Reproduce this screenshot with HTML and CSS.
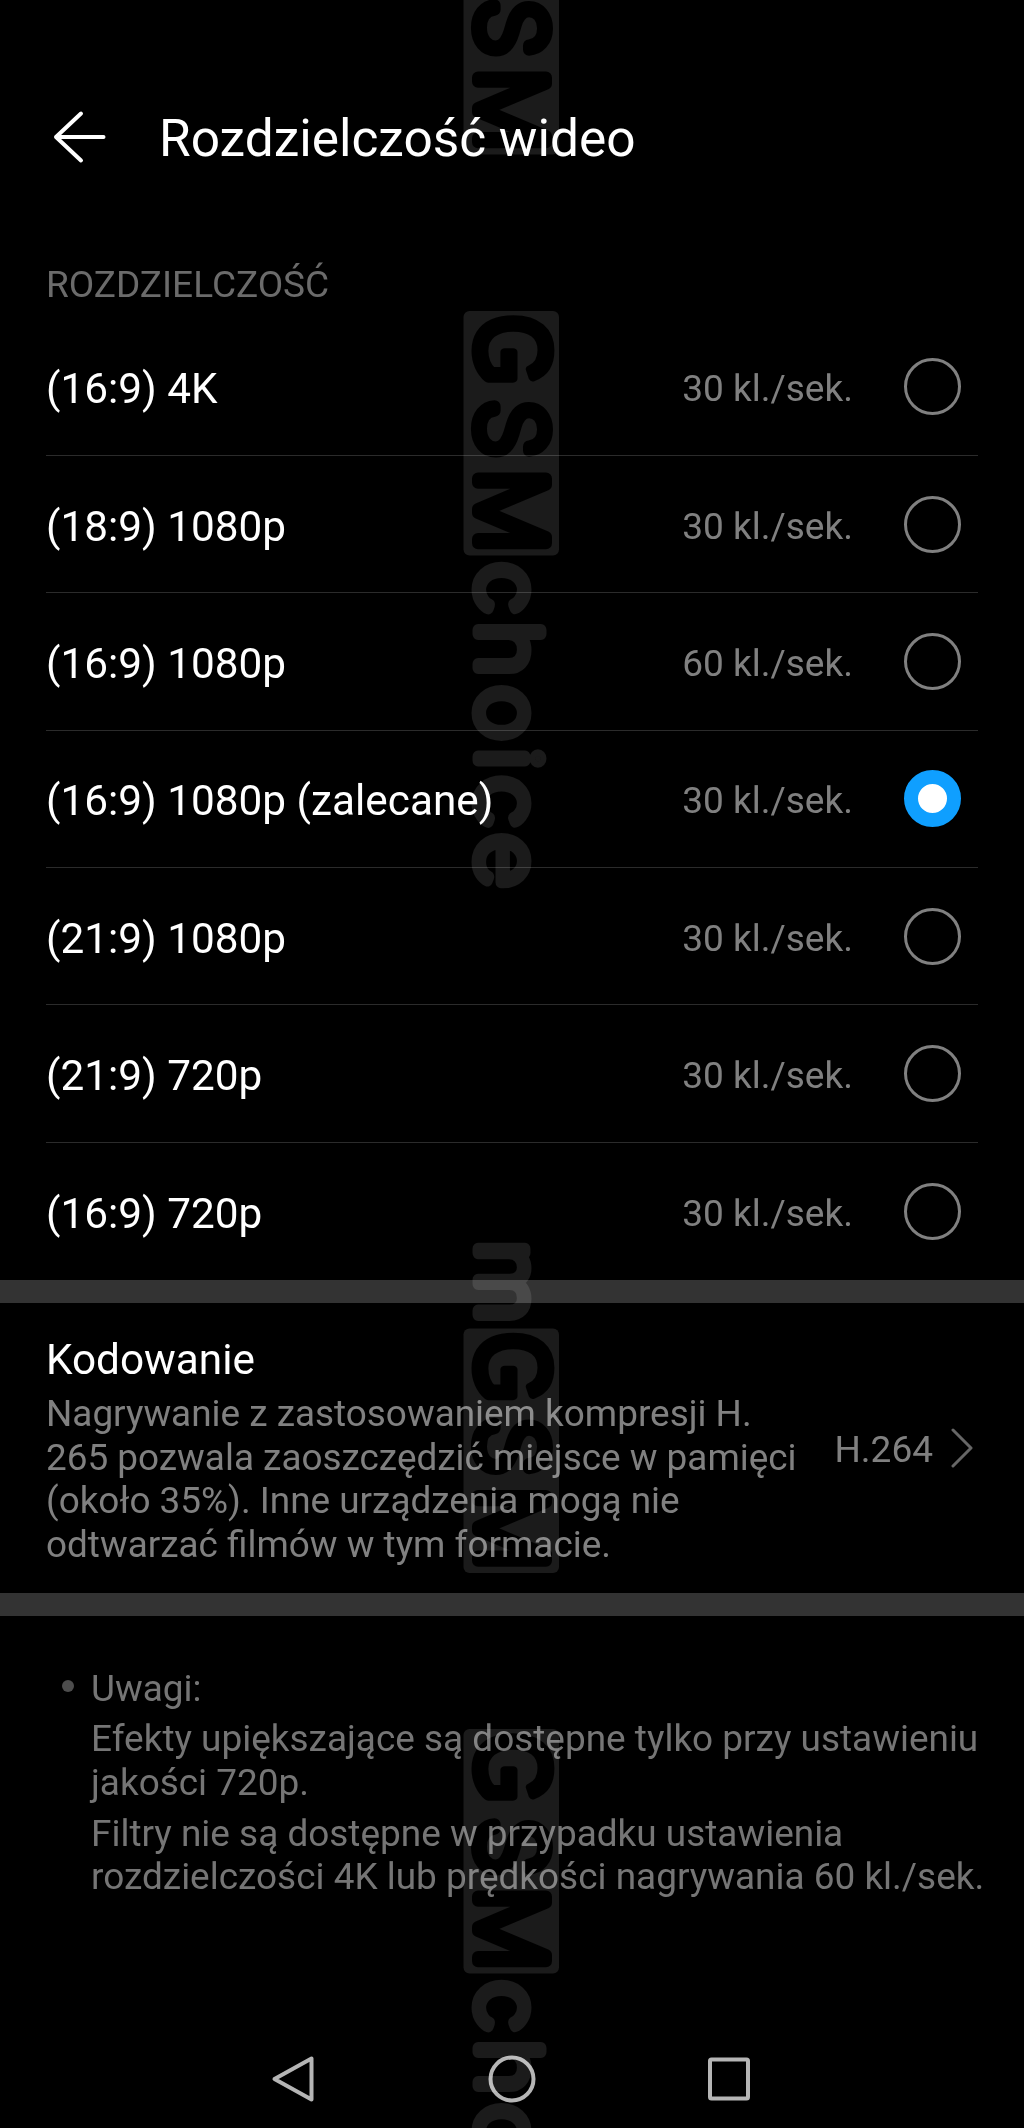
FILE: index.html
```html
<!DOCTYPE html>
<html lang="pl">
<head>
    <meta charset="UTF-8">
    <meta name="viewport" content="width=device-width, initial-scale=1.0">
    <title>Rozdzielczość wideo</title>
    <link rel="stylesheet" href="styles.css">
</head>
<body>
    <header>
        <svg class="back" viewBox="0 0 56 56">
            <path d="M52.500 28H5M30 4.500L5 28L30 51.500" />
        </svg>
        <h1>Rozdzielczość wideo</h1>
    </header>

    <main>
        <h2>ROZDZIELCZOŚĆ</h2>
        <ul class="options">
            <li><span class="name">(16:9) 4K</span><span class="fps">30 kl./sek.</span><span class="radio"></span></li>
            <li><span class="name">(18:9) 1080p</span><span class="fps">30 kl./sek.</span><span class="radio"></span></li>
            <li><span class="name">(16:9) 1080p</span><span class="fps">60 kl./sek.</span><span class="radio"></span></li>
            <li><span class="name">(16:9) 1080p (zalecane)</span><span class="fps">30 kl./sek.</span><span class="radio checked"></span></li>
            <li><span class="name">(21:9) 1080p</span><span class="fps">30 kl./sek.</span><span class="radio"></span></li>
            <li><span class="name">(21:9) 720p</span><span class="fps">30 kl./sek.</span><span class="radio"></span></li>
            <li><span class="name">(16:9) 720p</span><span class="fps">30 kl./sek.</span><span class="radio"></span></li>
        </ul>

        <section class="encoding">
            <div class="info">
                <h3>Kodowanie</h3>
                <p>Nagrywanie z zastosowaniem kompresji H.<br>265 pozwala zaoszczędzić miejsce w pamięci<br>(około 35%). Inne urządzenia mogą nie<br>odtwarzać filmów w tym formacie.</p>
            </div>
            <span class="value">H.264</span>
            <svg class="chevron" viewBox="0 0 22 40">
                <path d="M2 2L20 20L2 38" />
            </svg>
        </section>

        <section class="notes">
            <span class="dot"></span>
            <div>
                <p>Uwagi:</p>
                <p>Efekty upiększające są dostępne tylko przy ustawieniu<br>jakości 720p.</p>
                <p>Filtry nie są dostępne w przypadku ustawienia<br>rozdzielczości 4K lub prędkości nagrywania 60 kl./sek.</p>
            </div>
        </section>
    </main>

    <footer>
        <svg viewBox="0 0 48 48"><path d="M40.500 3.500V44.500L3.500 24Z" /></svg>
        <svg viewBox="0 0 48 48"><circle cx="24" cy="24" r="21.500" /></svg>
        <svg viewBox="0 0 48 48"><rect x="5" y="4.500" width="38" height="39" rx="1.500" /></svg>
    </footer>

    <!-- Watermark running down the page -->
    <svg class="watermark" viewBox="0 0 1024 2128">
        <defs>
            <g id="gsm">
                <rect y="-95.500" width="244.500" height="95.500" rx="6" />
                <g class="caps">
                    <text class="spur" x="39" y="-13" textLength="71" lengthAdjust="spacingAndGlyphs">G</text>
                    <text x="118" y="-14">S</text>
                    <text x="200" y="-14">M</text>
                </g>
            </g>
            <g id="gsmchoice">
                <use href="#gsm" />
                <text class="lower" transform="scale(1.08 1)" x="256.500 313 372.200 414.400 454.200 508.800" y="-14.500">choice</text>
            </g>
        </defs>
        <use href="#gsm" transform="translate(463.500 -90) rotate(90)" />
        <use href="#gsmchoice" transform="translate(463.500 311) rotate(90)" />
        <g transform="translate(463.500 1328.500) rotate(90)">
            <text class="lower" transform="scale(1.1 1)" x="-42.500" y="-14.500">m</text>
            <use href="#gsm" />
        </g>
        <use href="#gsmchoice" transform="translate(463.500 1729) rotate(90)" />
    </svg>
</body>
</html>
```

FILE: styles.css
```css
/* Reset default styles */
body, h1, h2, h3, p, ul, li {
    margin: 0;
    padding: 0;
    box-sizing: border-box;
    font-weight: normal;
}

body {
    position: relative;
    display: flex;
    flex-direction: column;
    height: 2128px;
    overflow: hidden;
    background-color: #000;
    color: #fff;
    font-family: Roboto, sans-serif;
}

svg {
    fill: none;
    stroke-linecap: round;
    stroke-linejoin: round;
}

header {
    display: flex;
    align-items: center;
    height: 60px;
    padding: 109px 0 0 51px;
}

.back {
    width: 56px;
    height: 56px;
    margin-right: 52px;
    margin-bottom: 4px;
    stroke: #fff;
    stroke-width: 4;
}

h1 {
    font-size: 51.400px;
    line-height: 60px;
}

h2 {
    margin: 91px 0 0 46px;
    font-size: 37px;
    line-height: 50px;
    color: #6b6b6b;
}

/* Resolution list */
.options {
    margin-top: 8.500px;
    padding: 0 46px;
    list-style-type: none;
}

.options li {
    display: flex;
    align-items: center;
    height: 137.400px;
    padding-right: 17px;
    border-bottom: 1px solid #2b2b2b;
}

.options li:last-child {
    border-bottom: none;
}

.name {
    flex: 1;
    padding-top: 4px;
    font-size: 42.300px;
}

.fps {
    padding-top: 4px;
    font-size: 37px;
    color: #808080;
}

.radio {
    box-sizing: border-box;
    width: 57px;
    height: 57px;
    margin-left: 51px;
    border: 3px solid #808080;
    border-radius: 50%;
}

.radio.checked {
    border: 14px solid #0f9fff;
    background-color: #fff;
}

/* Encoding row, between the two thick dividers */
.encoding {
    display: flex;
    align-items: center;
    height: 290px;
    padding: 0 51px 0 46px;
    border-top: 23px solid #333;
    border-bottom: 23px solid #333;
}

.info {
    flex: 1;
    padding-top: 5px;
}

h3 {
    font-size: 42.300px;
    line-height: 50px;
}

.encoding p {
    margin-top: 7px;
    font-size: 36.900px;
    line-height: 43.600px;
    color: #808080;
}

.value {
    padding-top: 3px;
    font-size: 37px;
    color: #808080;
}

.chevron {
    width: 22px;
    height: 40px;
    margin-left: 18px;
    stroke: #666;
    stroke-width: 3;
}

.notes {
    display: flex;
    padding: 50.500px 0 0 62px;
    font-size: 36.950px;
    line-height: 43.600px;
    color: #757575;
}

.notes p {
    margin-bottom: 7px;
}

.dot {
    width: 12px;
    height: 12px;
    margin: 13px 17px 0 0;
    border-radius: 50%;
    background-color: #4d4d4d;
}

/* System navigation bar */
footer {
    display: flex;
    justify-content: center;
    gap: 169px;
    margin-top: auto;
    padding-bottom: 25px;
}

footer svg {
    width: 48px;
    height: 48px;
    stroke: #b5b5b5;
    stroke-width: 4;
}

.watermark {
    position: absolute;
    top: 0;
    left: 0;
    width: 1024px;
    height: 2128px;
    fill: #1b1b1b;
    mix-blend-mode: screen;
    pointer-events: none;
}

.watermark text {
    font-family: Inter, sans-serif;
    font-weight: 200;
    text-anchor: middle;
    stroke-width: 12;
}

.caps {
    font-size: 94px;
    fill: #000;
    stroke: #000;
}

.watermark .spur {
    font-family: "Liberation Sans", sans-serif;
    font-size: 104px;
    stroke-width: 9;
}

.watermark .lower {
    font-size: 87px;
    stroke: #1b1b1b;
    stroke-width: 11;
}
```
